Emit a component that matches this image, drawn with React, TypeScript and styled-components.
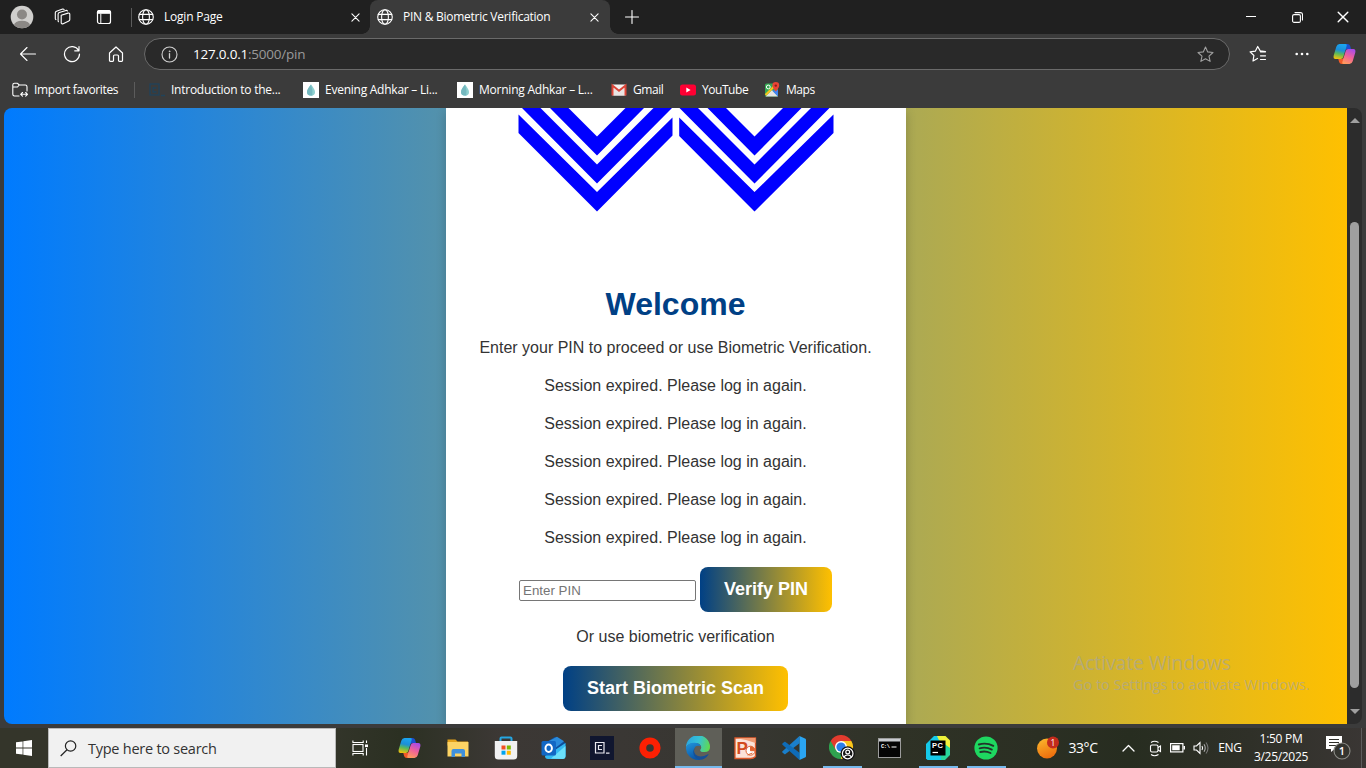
import React from "react";
import styled, { createGlobalStyle, css } from "styled-components";

const Global = createGlobalStyle`
  * { box-sizing: border-box; }
  html, body { margin: 0; padding: 0; }
  body { width: 1366px; height: 768px; overflow: hidden; background: #3b3b3b; }
  svg { display: block; flex: none; }
`;

const Screen = styled.div`
  width: 1366px;
  height: 768px;
  display: flex;
  flex-direction: column;
  font-family: "Open Sans", "Noto Sans", sans-serif;
  color: #fff;
  background: #3b3b3b;
  overflow: hidden;
`;

const Label = styled.span<{ $size?: number; $ls?: number; $color?: string; $lh?: number }>`
  font-size: ${(p) => p.$size ?? 12}px;
  letter-spacing: ${(p) => p.$ls ?? -0.3}px;
  color: ${(p) => p.$color ?? "#fff"};
  white-space: nowrap;
  line-height: ${(p) => p.$lh ?? 16}px;
`;

const Slot = styled.div<{ $w: number; $align?: string }>`
  width: ${(p) => p.$w}px;
  flex: none;
  display: flex;
  align-items: center;
  justify-content: ${(p) => p.$align ?? "center"};
`;

const Spacer = styled.div`
  flex: 1;
`;

/* title bar */
const TitleBar = styled.div`
  height: 34px;
  flex: none;
  display: flex;
  align-items: center;
  background: #202020;
  padding-left: 1px;
`;

const Divider = styled.div<{ $h: number; $ml?: number }>`
  width: 1px;
  height: ${(p) => p.$h}px;
  margin-left: ${(p) => p.$ml ?? 0}px;
  background: #5c5c5c;
  flex: none;
`;

const Tab = styled.div<{ $active?: boolean; $w: number }>`
  width: ${(p) => p.$w}px;
  height: 34px;
  flex: none;
  display: flex;
  align-items: center;
  gap: 10px;
  padding: 0 ${(p) => (p.$active ? 11 : 10)}px 0 ${(p) => (p.$active ? 7 : 6)}px;
  position: relative;
  ${(p) =>
    p.$active &&
    css`
      background: #3b3b3b;
      border-radius: 8px 8px 0 0;
      &::before,
      &::after {
        content: "";
        position: absolute;
        bottom: 0;
        width: 8px;
        height: 8px;
      }
      &::before {
        left: -8px;
        background: radial-gradient(circle at 0 0, transparent 7.5px, #3b3b3b 8px);
      }
      &::after {
        right: -8px;
        background: radial-gradient(circle at 100% 0, transparent 7.5px, #3b3b3b 8px);
      }
    `}
`;

/* toolbar */
const Toolbar = styled.div`
  height: 40px;
  flex: none;
  display: flex;
  align-items: center;
  padding-left: 6px;
`;

const AddressBar = styled.div`
  width: 1086px;
  height: 32px;
  margin: 0 6px;
  border: 1px solid #6a6a6a;
  border-radius: 16px;
  background: #292929;
  display: flex;
  align-items: center;
  padding: 0 15px 0 16px;
`;

const Url = styled(Label)`
  margin-left: 15px;
  b {
    font-weight: 400;
    color: #fff;
  }
`;

const Bookmarks = styled.div`
  height: 34px;
  flex: none;
  display: flex;
  align-items: center;
  padding: 0 0 2px 12px;
`;

const Bookmark = styled.div<{ $w: number }>`
  width: ${(p) => p.$w}px;
  flex: none;
  display: flex;
  align-items: center;
  gap: 6px;
`;

/* page */
const Viewport = styled.div`
  height: 616px;
  flex: none;
  margin: 0 4px;
  display: flex;
  border-radius: 8px;
  overflow: hidden;
  position: relative;
`;

const Page = styled.div`
  flex: 1;
  display: flex;
  justify-content: center;
  background: linear-gradient(to right, #007bff, #ffc000);
  font-family: "Liberation Sans", Arial, sans-serif;
`;

const Card = styled.div`
  width: 460px;
  background: #fff;
  color: #333;
  display: flex;
  flex-direction: column;
  align-items: center;
  box-shadow: 0 4px 10px rgba(0, 0, 0, 0.2);
`;

const Heading = styled.h1`
  margin: 74px 0 16px;
  font-size: 32px;
  line-height: 37px;
  font-weight: 700;
  color: #004085;
`;

const Message = styled.p`
  margin: 0 0 20px;
  font-size: 16px;
  line-height: 18px;
`;

const PinRow = styled.form`
  display: flex;
  gap: 4px;
  align-items: center;
  margin-bottom: 16px;
`;

const PinInput = styled.input`
  width: 177px;
  height: 21px;
  margin-top: 2px;
  padding: 1px 3px;
  border: 1px solid #767676;
  border-radius: 2px;
  font-family: "Liberation Sans", Arial, sans-serif;
  font-size: 13.333px;
  &::placeholder {
    color: #757575;
  }
`;

const GradientButton = styled.button<{ $w: number }>`
  width: ${(p) => p.$w}px;
  height: 45px;
  padding: 0;
  border: 0;
  border-radius: 8px;
  background: linear-gradient(to right, #004085, #ffc000);
  color: #fff;
  font-family: "Liberation Sans", Arial, sans-serif;
  font-size: 18px;
  font-weight: 700;
`;

const ScrollTrack = styled.div`
  width: 15px;
  background: #2c2c2c;
  display: flex;
  flex-direction: column;
  align-items: center;
  padding: 10px 0 10px;
`;

const ScrollThumb = styled.div`
  width: 9px;
  height: 466px;
  margin-top: 99px;
  border-radius: 5px;
  background: #9f9f9f;
`;

const Arrow = styled.div<{ $down?: boolean }>`
  border: 5px solid transparent;
  border-top-width: ${(p) => (p.$down ? 5 : 0)}px;
  border-bottom-width: ${(p) => (p.$down ? 0 : 5)}px;
  ${(p) => (p.$down ? "border-top-color" : "border-bottom-color")}: #9f9f9f;
`;

const Watermark = styled.div`
  position: absolute;
  left: 1069px;
  top: 542px;
  display: flex;
  flex-direction: column;
`;

/* taskbar */
const Taskbar = styled.div`
  height: 40px;
  flex: none;
  margin-top: 4px;
  display: flex;
  align-items: center;
  background: linear-gradient(
    to right,
    #34352a 0,
    #33352a 330px,
    #2b3022 400px,
    #3c3835 500px,
    #3a3734 620px,
    #363630 760px,
    #2f3226 900px,
    #2b2f23 1040px,
    #272d20 1130px,
    #2f3028 1250px,
    #3a3634 1366px
  );
`;

const SearchBox = styled.div`
  width: 288px;
  height: 40px;
  background: #f1f1f1;
  border: 1px solid #b9b9b9;
  display: flex;
  align-items: center;
  gap: 11px;
  padding: 1px 0 0 11px;
`;

const AppButton = styled.div<{ $active?: boolean; $running?: boolean }>`
  width: 48px;
  height: 40px;
  flex: none;
  display: flex;
  align-items: center;
  justify-content: center;
  padding-right: 3px;
  background: ${(p) =>
    p.$active
      ? "linear-gradient(#76b9ed, #76b9ed) 0 100% / 47px 2px no-repeat, linear-gradient(#5f5f58, #5f5f58) 0 0 / 47px 40px no-repeat"
      : p.$running
        ? "linear-gradient(#76b9ed, #76b9ed) 4px 100% / 39px 2px no-repeat"
        : "none"};
`;

const Clock = styled.div`
  width: 66px;
  flex: none;
  display: flex;
  flex-direction: column;
  align-items: center;
  gap: 2px;
`;

const line = { fill: "none", stroke: "#fff", strokeWidth: 1.1, strokeLinecap: "round", strokeLinejoin: "round" } as const;

const Globe = () => (
  <svg width="16" height="16" viewBox="0 0 16 16" {...line}>
    <circle cx="8" cy="8" r="7.3" />
    <ellipse cx="8" cy="8" rx="3.4" ry="7.3" />
    <path d="M1.3 5.4h13.4M1.3 10.6h13.4" />
  </svg>
);

const Cross = ({ s = 9 }: { s?: number }) => (
  <svg width={s} height={s} viewBox="0 0 10 10" {...line} strokeWidth={1.2}>
    <path d="M1 1l8 8M9 1l-8 8" />
  </svg>
);

const Profile = () => (
  <svg width="24" height="24" viewBox="0 0 24 24">
    <clipPath id="pc"><circle cx="12" cy="12" r="11.3" /></clipPath>
    <circle cx="12" cy="12" r="11.3" fill="#d0cfcd" />
    <g clipPath="url(#pc)" fill="#8b8885">
      <circle cx="12" cy="9.5" r="5" />
      <ellipse cx="12" cy="20.5" rx="8" ry="4.8" />
    </g>
  </svg>
);

const Workspaces = () => (
  <svg width="18" height="18" viewBox="0 0 18 18" {...line}>
    <path d="M7.2 7.2l6.8-2.1q1.6-.3 1.8 1.2v5.2q0 1-1 1.4l-5.6 2.8q-1.900.7-2-1V7.2z" />
    <path d="M4.500 13.800q-.4-.2-.4-1V6.200q0-1.300 1.200-1.700l6.700-2.100q1-.2 1.400.6" />
    <path d="M1.900 11.600q-.6-.3-.6-1.100V4.800q0-1.200 1.200-1.600L8.600 1.100q1-.2 1.500.5" />
  </svg>
);

const TabActions = () => (
  <svg width="16" height="16" viewBox="0 0 16 16" {...line} strokeWidth={1.2}>
    <rect x="1.500" y="1.500" width="13" height="13" rx="2" />
    <path d="M1.500 4.200V3.500q0-2 2-2h9q2 0 2 2v.7z" fill="#fff" />
    <path d="M4.800 5v9" strokeWidth="1" />
  </svg>
);

const Back = () => (
  <svg width="18" height="16" viewBox="0 0 18 16" {...line}>
    <path d="M16.500 8H1.500M8 1.500L1.500 8 8 14.500" />
  </svg>
);

const Reload = () => (
  <svg width="18" height="18" viewBox="0 0 18 18" {...line} strokeWidth={1.2}>
    <path d="M15.600 5.500A7.500 7.500 0 1 0 16.500 9M16 1.500v4.300h-4.300" />
  </svg>
);

const Home = () => (
  <svg width="16" height="18" viewBox="0 0 16 18" {...line} strokeWidth={1.2}>
    <path d="M1.500 8L8 2l6.500 6v7.500q0 .8-.8.8h-2.400q-.8 0-.8-.8V11q0-1-1-1h-3q-1 0-1 1v4.500q0 .8-.8.8H2.300q-.8 0-.8-.8z" />
  </svg>
);

const Info = () => (
  <svg width="17" height="17" viewBox="0 0 17 17" {...line} stroke="#d0d0d0">
    <circle cx="8.500" cy="8.500" r="7.500" />
    <path d="M8.500 7.700v4.300" strokeWidth="1.300" />
    <circle cx="8.500" cy="5.300" r=".5" fill="#d0d0d0" strokeWidth=".6" />
  </svg>
);

const Star = () => (
  <svg width="17" height="17" viewBox="0 0 17 17" {...line} stroke="#a0a0a0">
    <path d="M8.500 1l2.200 4.900 5.300.6-4 3.600 1.100 5.300-4.600-2.700-4.600 2.700L5 10.100 1 6.500l5.300-.6z" />
  </svg>
);

const Favorites = () => (
  <svg width="18" height="18" viewBox="0 0 18 18" {...line} strokeWidth={1.2}>
    <path d="M16.500 6.500l-5.300-.6L8.700 1.500 6.300 6.200l-5.200.7 3.800 3.600L4 16l4.500-2.500M11.500 6.800h5M11.500 10.800h5M11.500 14.500h5" />
  </svg>
);

const Dots = () => (
  <svg width="14" height="4" viewBox="0 0 14 4" fill="#fff">
    <circle cx="1.700" cy="2" r="1.300" /><circle cx="7" cy="2" r="1.300" /><circle cx="12.300" cy="2" r="1.300" />
  </svg>
);

const Copilot = ({ id }: { id: string }) => (
  <svg width="23" height="22" viewBox="0 0 23 22">
    <defs>
      <linearGradient id={id + "a"} x1=".5" y1="0" x2=".3" y2="1">
        <stop offset="0" stopColor="#1aa5f0" /><stop offset=".4" stopColor="#1c8fd8" /><stop offset=".65" stopColor="#5bb95a" /><stop offset="1" stopColor="#f3c20c" />
      </linearGradient>
      <linearGradient id={id + "b"} x1=".7" y1="0" x2=".3" y2="1">
        <stop offset="0" stopColor="#a84be8" /><stop offset=".5" stopColor="#f0609a" /><stop offset="1" stopColor="#ff9a5c" />
      </linearGradient>
    </defs>
    <path d="M11 1h3.500q2 0 2.600 1.800L18 6h-3.500q-2 0-2.500 1.500z" fill="#1b4fd0" />
    <path d="M12 21H8.700q-2 0-2.600-2L5.300 16h3.500q1.700 0 2.400-2z" fill="#f05a28" />
    <path d="M6.500 1h6q1.800 0 1.200 1.800L10.300 14q-.6 2-2.500 2H2.600Q0 16 .7 12.500L3.300 3.800Q4.200 1 6.500 1z" fill={`url(#${id}a)`} />
    <path d="M16.500 21h-6q-1.800 0-1.200-1.800L12.700 8q.6-2 2.500-2h5.200Q23 6 22.300 9.500l-2.600 8.700q-.9 2.800-3.200 2.800z" fill={`url(#${id}b)`} />
  </svg>
);

const ImportIcon = () => (
  <svg width="16" height="16" viewBox="0 0 16 16" {...line}>
    <path d="M7 14H2.500Q.8 14 .8 12.300V3Q.8 1.300 2.500 1.300h3L7.300 3h6q1.700 0 1.700 1.700V9M.8 5h4.700L7.300 3M9 12.300h6M10.500 10.500L8.700 12.300l1.800 1.800M13.700 10.500l1.800 1.800-1.800 1.800" />
  </svg>
);

const CourseIcon = () => (
  <svg width="16" height="16" viewBox="0 0 16 16" fill="none" stroke="#21435a" strokeWidth="1.300">
    <rect x="1" y="2" width="9" height="11" /><path d="M7.500 6H4v4h3.500M12 13.500h4" />
  </svg>
);

const DropIcon = () => (
  <svg width="16" height="16" viewBox="0 0 16 16">
    <rect width="16" height="16" fill="#fff" />
    <path d="M8 2.500q4 5 4 7.500a4 3.800 0 0 1-8 0Q4 7.500 8 2.500z" fill="#8fd0cf" />
    <path d="M8 2.500q2 5 1.300 11H8q-4 0-4-3.500Q4 7.500 8 2.500z" fill="#74b8bf" />
  </svg>
);

const Gmail = () => (
  <svg width="16" height="16" viewBox="0 0 16 16">
    <rect x="1" y="2.500" width="14" height="11" rx="1" fill="#f3f1f1" />
    <path d="M2.500 13.500V5L8 9.300 13.500 5v8.500" fill="#e9e4e3" />
    <path d="M1.500 13.500V3.500L8 8.800l6.500-5.300v10" fill="none" stroke="#db4437" strokeWidth="2" />
  </svg>
);

const YouTube = () => (
  <svg width="16" height="16" viewBox="0 0 16 16">
    <rect x="0" y="2.500" width="16" height="11" rx="2.500" fill="#ff0033" /><path d="M6.300 5.600v4.800L10.600 8z" fill="#fff" />
  </svg>
);

const Maps = () => (
  <svg width="16" height="16" viewBox="0 0 16 16">
    <rect x="1" y="1.500" width="13" height="13" rx="1.500" fill="#35a853" />
    <path d="M1.500 14.500L8 8l6 6.500z" fill="#e6e5e3" />
    <path d="M1.500 13L12 2.500" stroke="#f8c41b" strokeWidth="2.200" />
    <path d="M8 8.500l6 6V8z" fill="#4285f4" />
    <circle cx="4.300" cy="5" r="1.900" fill="none" stroke="#fff" strokeWidth="1" />
    <path d="M11.800 0a3.400 3.400 0 0 1 3.400 3.600q0 2-3.400 6-3.400-4-3.400-6A3.400 3.400 0 0 1 11.800 0z" fill="#ea4335" />
    <circle cx="11.800" cy="3.600" r="1.200" fill="#8c1f18" />
  </svg>
);

const Chevrons = () => (
  <svg width="316" height="104" viewBox="0 0 316 104" fill="#0000ff">
    <path d="M.5 6.500L79 84l75.500-74.500v18L79 103.500.5 25z" />
    <path d="M161.200 9.500L236.500 84 315.500 6.500V25l-79 78.500-75.300-75.500z" />
    {[0, 157.500].map((x) => (
      <g key={x} transform={`translate(${x} 0)`}>
        <path d="M4 0h18.500L79 56.500 135.500 0H154L79 75.500z" />
        <path d="M32 0h18.500L79 28.500 107.500 0H126L79 47.500z" />
      </g>
    ))}
  </svg>
);

const WinLogo = () => (
  <svg width="16" height="16" viewBox="0 0 16 16" fill="#fff">
    <path d="M0 2.300L6.600 1.400v6.200H0zM7.300 1.300L16 0v7.600H7.300zM0 8.400h6.600v6.200L0 13.700zM7.300 8.400H16V16l-8.700-1.300z" />
  </svg>
);

const SearchIcon = () => (
  <svg width="17" height="17" viewBox="0 0 17 17" fill="none" stroke="#222" strokeWidth="1.200">
    <circle cx="10.600" cy="6" r="5.200" /><path d="M7 9.800L.7 16" />
  </svg>
);

const TaskView = () => (
  <svg width="17" height="16" viewBox="0 0 17 16" fill="none" stroke="#fff" strokeWidth="1.100">
    <rect x="1" y="4.500" width="10" height="7" /><path d="M.9.500v2h10.300v-2M.9 15.500v-2h10.300v2M14.500.500v2.500M14.500 8v7.500" />
    <rect x="13" y="4.500" width="3" height="2.600" fill="#fff" stroke="none" />
  </svg>
);

const Explorer = () => (
  <svg width="22" height="20" viewBox="0 0 22 20">
    <path d="M.5 1.500h8l2 2H21v4H.5z" fill="#e3a11a" /><path d="M.5 4h21v14.500H.5z" fill="#fcd364" />
    <path d="M4.500 19v-6q0-2 2-2h9.500q2 0 2 2v6h-3.500v-3.500h-6.500V19z" fill="#3f90dc" />
  </svg>
);

const Store = () => (
  <svg width="24" height="24" viewBox="0 0 24 24">
    <path d="M6.500 6V2.500q0-1 1-1h9q1 0 1 1V6" fill="none" stroke="#25a6e2" strokeWidth="2" />
    <path d="M.8 5h22.400v15q0 3.500-3.500 3.500H4.300Q.8 23.500.8 20z" fill="#f1f1f2" />
    <path d="M7.500 9.500h4v4h-4z" fill="#f25022" /><path d="M12.800 9.500h4v4h-4z" fill="#7fba00" />
    <path d="M7.500 14.700h4v4h-4z" fill="#00a4ef" /><path d="M12.800 14.700h4v4h-4z" fill="#ffb900" />
  </svg>
);

const Outlook = () => (
  <svg width="25" height="24" viewBox="0 0 25 24">
    <path d="M4 7L14 .8 24.500 7v13l-2 2.500H6L4 20z" fill="#0f4f9c" />
    <path d="M8 5L16 .8l7 4.500-9 7z" fill="#2a8bdc" />
    <path d="M14 14l10.500-7v13q0 3-3 3H7q-3 0-3-3z" fill="#33b9f2" />
    <path d="M10 22.500L24.500 10v10q0 3-3 3z" fill="#6be0fb" />
    <rect x=".5" y="5" width="14.500" height="14.500" rx="1.500" fill="#1267c4" />
    <ellipse cx="7.700" cy="12.200" rx="3.200" ry="3.700" fill="none" stroke="#fff" strokeWidth="2" />
  </svg>
);

const CommandLineApp = () => (
  <svg width="24" height="24" viewBox="0 0 24 24">
    <rect width="24" height="24" fill="#10162f" />
    <path d="M5.500 6.500h8.500v10.500H5.500zM12 9.500H8.500v4H12M16 17.200h3.500" fill="none" stroke="#e8e8ef" strokeWidth="1.200" />
  </svg>
);

const RedRing = () => (
  <svg width="22" height="22" viewBox="0 0 22 22"><circle cx="11" cy="11" r="7.200" fill="none" stroke="#fc2003" strokeWidth="6.800" /></svg>
);

const Edge = () => (
  <svg width="24" height="24" viewBox="0 0 24 24">
    <defs>
      <linearGradient id="eg1" x1="0" y1=".3" x2="1" y2=".5"><stop offset="0" stopColor="#2aa5e0" /><stop offset=".5" stopColor="#35c1d8" /><stop offset="1" stopColor="#5fd952" /></linearGradient>
      <linearGradient id="eg2" x1="0" y1="0" x2=".4" y2="1"><stop offset="0" stopColor="#2196dc" /><stop offset="1" stopColor="#0b57a8" /></linearGradient>
    </defs>
    <path d="M0 11.500A12 12 0 0 1 24 11q0 5-5.500 5-4.500 0-4.300-2 1.200-1.300 1-3Q14.500 7 9 7 2 7 0 11.500z" fill="url(#eg1)" />
    <path d="M0 11.500Q2 6.600 8.500 6.800q5 .2 6.300 3.300-6.300-1.800-6.800 4-.2 6.500 6.500 9.600Q12.500 24 12 24A12 12 0 0 1 0 11.500z" fill="url(#eg2)" />
    <path d="M9.500 11.500q-3 3.500 0 7 4.500 4 12.500-.3.800-.3.400.5Q19 24 13.500 23.800q-6-2-6.300-7.800 0-3 2.300-4.500z" fill="#164f97" />
  </svg>
);

const PowerPoint = () => (
  <svg width="23" height="23" viewBox="0 0 23 23">
    <path d="M1 1h20.500v18.500q-2 2-5 2H1z" fill="#fbe3d9" stroke="#dd5a2b" strokeWidth="1.300" />
    <path d="M1 1h20.500v5L12 3z" fill="#f09a72" />
    <circle cx="16.500" cy="13.700" r="4.500" fill="#fff" stroke="#e0622f" strokeWidth="1" />
    <path d="M16.500 13.700v-4a4 4 0 0 1 4 4zM13.500 18l5-2" fill="#e0622f" stroke="#e0622f" />
    <text x="2.500" y="16.500" fontFamily="Liberation Sans, sans-serif" fontWeight="700" fontSize="17" fill="#d24a1d">P</text>
  </svg>
);

const VSCode = () => (
  <svg width="24" height="24" viewBox="0 0 24 24">
    <path d="M17.500 0v7.200L3.200 18.200Q2.700 18.500 2.200 18.100L.5 16.500q-.6-.6 0-1.200z" fill="#1a7fcb" />
    <path d="M17.500 24v-7.200L3.200 5.800Q2.700 5.500 2.200 5.900L.5 7.500q-.6.600 0 1.200z" fill="#0f6cb8" />
    <path d="M17.500 0L23.500 2.800q.5.300.5.900v16.600q0 .6-.5.900L17.500 24z" fill="#2aa5f2" />
  </svg>
);

const Chrome = () => (
  <svg width="26" height="26" viewBox="0 0 26 26">
    <path d="M12 12L1.600 6A12 12 0 0 0 12 24z" fill="#2fa24f" />
    <path d="M12 12L12 24A12 12 0 0 0 22.400 6H12z" fill="#fcc61b" />
    <path d="M12 6H22.400A12 12 0 0 0 1.600 6l5.200 9z" fill="#e33b2e" />
    <circle cx="12" cy="12" r="6" fill="#fff" /><circle cx="12" cy="12" r="4.600" fill="#2b7de9" />
    <circle cx="18.700" cy="18.500" r="7.200" fill="#111" />
    <g fill="none" stroke="#fff" strokeWidth="1.200"><circle cx="18.700" cy="18.500" r="5.300" /><circle cx="18.700" cy="17" r="1.900" /><path d="M15 22q1-2 3.700-2t3.700 2" /></g>
  </svg>
);

const Cmd = () => (
  <svg width="23" height="20" viewBox="0 0 23 20">
    <rect x=".5" y=".5" width="22" height="19" fill="#050505" stroke="#9c9c9c" /><path d="M1 1h21v2.500H1z" fill="#c9ccd0" />
    <text x="3" y="9.500" fontFamily="Liberation Mono, monospace" fontWeight="700" fontSize="5.500" fill="#fff" textLength="9">C:\</text><path d="M13.500 9h5" stroke="#fff" />
  </svg>
);

const PyCharm = () => (
  <svg width="24" height="24" viewBox="0 0 24 24">
    <path d="M9 0h10.500L24 4.500v13L17 22 4 10z" fill="#e9f23b" /><path d="M0 8l8-8h3l10 21.500-3.500 2.500H1.500L0 22.500z" fill="#15c9ea" />
    <path d="M13 4L24 12v7l-5 5h-4z" fill="#28d79a" /><path d="M16 1l7.500 3v7l-7-6z" fill="#f4f03a" />
    <rect x="4.500" y="4.500" width="15" height="15" fill="#000" />
    <text x="6" y="12" fontFamily="Liberation Sans, sans-serif" fontWeight="700" fontSize="7.500" fill="#fff" textLength="11">PC</text><path d="M6.500 16.500h5.500" stroke="#fff" strokeWidth="1.200" />
  </svg>
);

const Spotify = () => (
  <svg width="24" height="24" viewBox="0 0 24 24">
    <circle cx="12" cy="12" r="11.600" fill="#1ed760" />
    <path d="M4.800 8.500q7.700-2.200 14.500 1.300M5.600 12.300q6.600-1.800 12.200 1.300M6.300 16q5.300-1.400 10.200 1" fill="none" stroke="#23342a" strokeWidth="1.900" strokeLinecap="round" />
  </svg>
);

const Weather = () => (
  <svg width="24" height="24" viewBox="0 0 24 24">
    <defs><linearGradient id="sun" x1=".2" y1="0" x2=".6" y2="1"><stop offset="0" stopColor="#fbb52c" /><stop offset="1" stopColor="#ed6c0c" /></linearGradient></defs>
    <circle cx="11" cy="12.500" r="10" fill="url(#sun)" /><circle cx="17" cy="6.500" r="6" fill="#c42b1c" />
    <text x="17" y="9.500" textAnchor="middle" fontFamily="Open Sans, sans-serif" fontSize="8.500" fill="#fff">1</text>
  </svg>
);

const MeetNow = () => (
  <svg width="13" height="17" viewBox="0 0 13 17" fill="none" stroke="#fff" strokeWidth="1.100">
    <rect x="1.500" y="5" width="7.500" height="7" rx="1.500" /><path d="M9 7.500l2.500-1.500v5.500L9 10M2 2.500Q5.500 0 9.500 2.500M2 14.500Q5.500 17 9.500 14.500" />
  </svg>
);

const Battery = () => (
  <svg width="15" height="10" viewBox="0 0 15 10"><rect x=".6" y=".6" width="12.300" height="8.300" fill="none" stroke="#fff" strokeWidth="1.200" /><path d="M2.200 2.300h7.500v5H2.200zM13.500 3H15v3.500h-1.500z" fill="#fff" /></svg>
);

const Sound = () => (
  <svg width="17" height="14" viewBox="0 0 17 14" fill="none" stroke="#fff" strokeWidth="1.100">
    <path d="M1 5h2.500L7 1.500v11L3.500 9H1z" /><path d="M9 5q1.200 2 0 4" /><path d="M11 3.300q2.500 3.700 0 7.400" stroke="#aaa" /><path d="M13 1.500q4 5.500 0 11" stroke="#777" />
  </svg>
);

const Notify = () => (
  <svg width="26" height="26" viewBox="0 0 26 26">
    <path d="M1 1h16v13H9.500L6 17v-3H1z" fill="#fff" /><path d="M4 4.500h10M4 7.500h10M4 10.500h7" stroke="#30302a" strokeWidth="1.200" />
    <circle cx="17" cy="16" r="8" fill="#34342f" stroke="#8b8b86" strokeWidth="1.100" />
    <text x="17" y="20" textAnchor="middle" fontFamily="Open Sans, sans-serif" fontWeight="600" fontSize="11" fill="#fff">1</text>
  </svg>
);

const watermarkColor = "rgba(165, 165, 160, 0.65)";

export default function App() {
  return (
    <Screen>
      <Global />
      <TitleBar>
        <Slot $w={42}><Profile /></Slot>
        <Slot $w={39}><Workspaces /></Slot>
        <Slot $w={44}><TabActions /></Slot>
        <Divider $h={19} $ml={5} />
        <Tab $w={238}><Globe /><Label $ls={-0.22}>Login Page</Label><Spacer /><Cross /></Tab>
        <Tab $active $w={240}><Globe /><Label $ls={-0.26}>PIN &amp; Biometric Verification</Label><Spacer /><Cross /></Tab>
        <Slot $w={43}>
          <svg width="14" height="14" viewBox="0 0 14 14" {...line}><path d="M7 .5v13M.5 7h13" /></svg>
        </Slot>
        <Spacer />
        <Slot $w={46}><svg width="10" height="2"><path d="M0 .5h10" stroke="#fff" /></svg></Slot>
        <Slot $w={46}>
          <svg width="11" height="11" viewBox="0 0 11 11" {...line}><rect x=".6" y="2.600" width="7.800" height="7.800" rx="1.500" /><path d="M3 .6h5.500q2 0 2 2V8" /></svg>
        </Slot>
        <Slot $w={46}><Cross s={12} /></Slot>
      </TitleBar>

      <Toolbar>
        <Slot $w={44}><Back /></Slot>
        <Slot $w={44}><Reload /></Slot>
        <Slot $w={44}><Home /></Slot>
        <AddressBar>
          <Info />
          <Url $size={13.5} $ls={-0.22} $color="#9a9a9a"><b>127.0.0.1</b>:5000/pin</Url>
          <Spacer />
          <Star />
        </AddressBar>
        <Slot $w={44}><Favorites /></Slot>
        <Slot $w={44}><Dots /></Slot>
        <Slot $w={40}><Copilot id="top" /></Slot>
      </Toolbar>

      <Bookmarks>
        <Bookmark $w={122}><ImportIcon /><Label $ls={-0.36}>Import favorites</Label></Bookmark>
        <Divider $h={16} />
        <Bookmark $w={168}><Slot $w={30} $align="flex-end"><CourseIcon /></Slot><Label $ls={-0.25}>Introduction to the...</Label></Bookmark>
        <Bookmark $w={154}><DropIcon /><Label $ls={-0.25}>Evening Adhkar – Li...</Label></Bookmark>
        <Bookmark $w={154}><DropIcon /><Label $ls={-0.23}>Morning Adhkar – L...</Label></Bookmark>
        <Bookmark $w={69}><Gmail /><Label $ls={-0.45}>Gmail</Label></Bookmark>
        <Bookmark $w={84}><YouTube /><Label $ls={-0.45}>YouTube</Label></Bookmark>
        <Bookmark $w={60}><Maps /><Label $ls={-0.45}>Maps</Label></Bookmark>
      </Bookmarks>

      <Viewport>
        <Page>
          <Card>
            <Chevrons />
            <Heading>Welcome</Heading>
            <Message>Enter your PIN to proceed or use Biometric Verification.</Message>
            {[0, 1, 2, 3, 4].map((n) => (
              <Message key={n}>Session expired. Please log in again.</Message>
            ))}
            <PinRow>
              <PinInput placeholder="Enter PIN" />
              <GradientButton type="button" $w={132}>Verify PIN</GradientButton>
            </PinRow>
            <Message>Or use biometric verification</Message>
            <GradientButton type="button" $w={225}>Start Biometric Scan</GradientButton>
          </Card>
        </Page>
        <ScrollTrack>
          <Arrow />
          <ScrollThumb />
          <Spacer />
          <Arrow $down />
        </ScrollTrack>
        <Watermark>
          <Label $size={19.5} $ls={-0.15} $lh={26} $color={watermarkColor}>Activate Windows</Label>
          <Label $size={14.4} $ls={0.02} $lh={18} $color={watermarkColor}>Go to Settings to activate Windows.</Label>
        </Watermark>
      </Viewport>

      <Taskbar>
        <Slot $w={48}><WinLogo /></Slot>
        <SearchBox><SearchIcon /><Label $size={14.5} $ls={-0.25} $color="#333">Type here to search</Label></SearchBox>
        <Slot $w={49}><TaskView /></Slot>
        <Slot $w={2} />
        <AppButton><Copilot id="task" /></AppButton>
        <AppButton><Explorer /></AppButton>
        <AppButton><Store /></AppButton>
        <AppButton><Outlook /></AppButton>
        <AppButton><CommandLineApp /></AppButton>
        <AppButton><RedRing /></AppButton>
        <AppButton $active><Edge /></AppButton>
        <AppButton><PowerPoint /></AppButton>
        <AppButton><VSCode /></AppButton>
        <AppButton $running><Chrome /></AppButton>
        <AppButton><Cmd /></AppButton>
        <AppButton $running><PyCharm /></AppButton>
        <AppButton $running><Spotify /></AppButton>
        <Spacer />
        <Slot $w={24}><Weather /></Slot>
        <Slot $w={46}><Label $size={14} $ls={-0.4}>33°C</Label></Slot>
        <Slot $w={4} />
        <Slot $w={36}><svg width="13" height="8" viewBox="0 0 13 8" {...line} strokeWidth={1.3}><path d="M1 7l5.500-5.500L12 7" /></svg></Slot>
        <Slot $w={18}><MeetNow /></Slot>
        <Slot $w={26}><Battery /></Slot>
        <Slot $w={22}><Sound /></Slot>
        <Slot $w={36}><Label $ls={-0.3}>ENG</Label></Slot>
        <Clock><Label>1:50 PM</Label><Label>3/25/2025</Label></Clock>
        <Slot $w={47}><Notify /></Slot>
        <Divider $h={40} />
        <Slot $w={4} />
      </Taskbar>
    </Screen>
  );
}
